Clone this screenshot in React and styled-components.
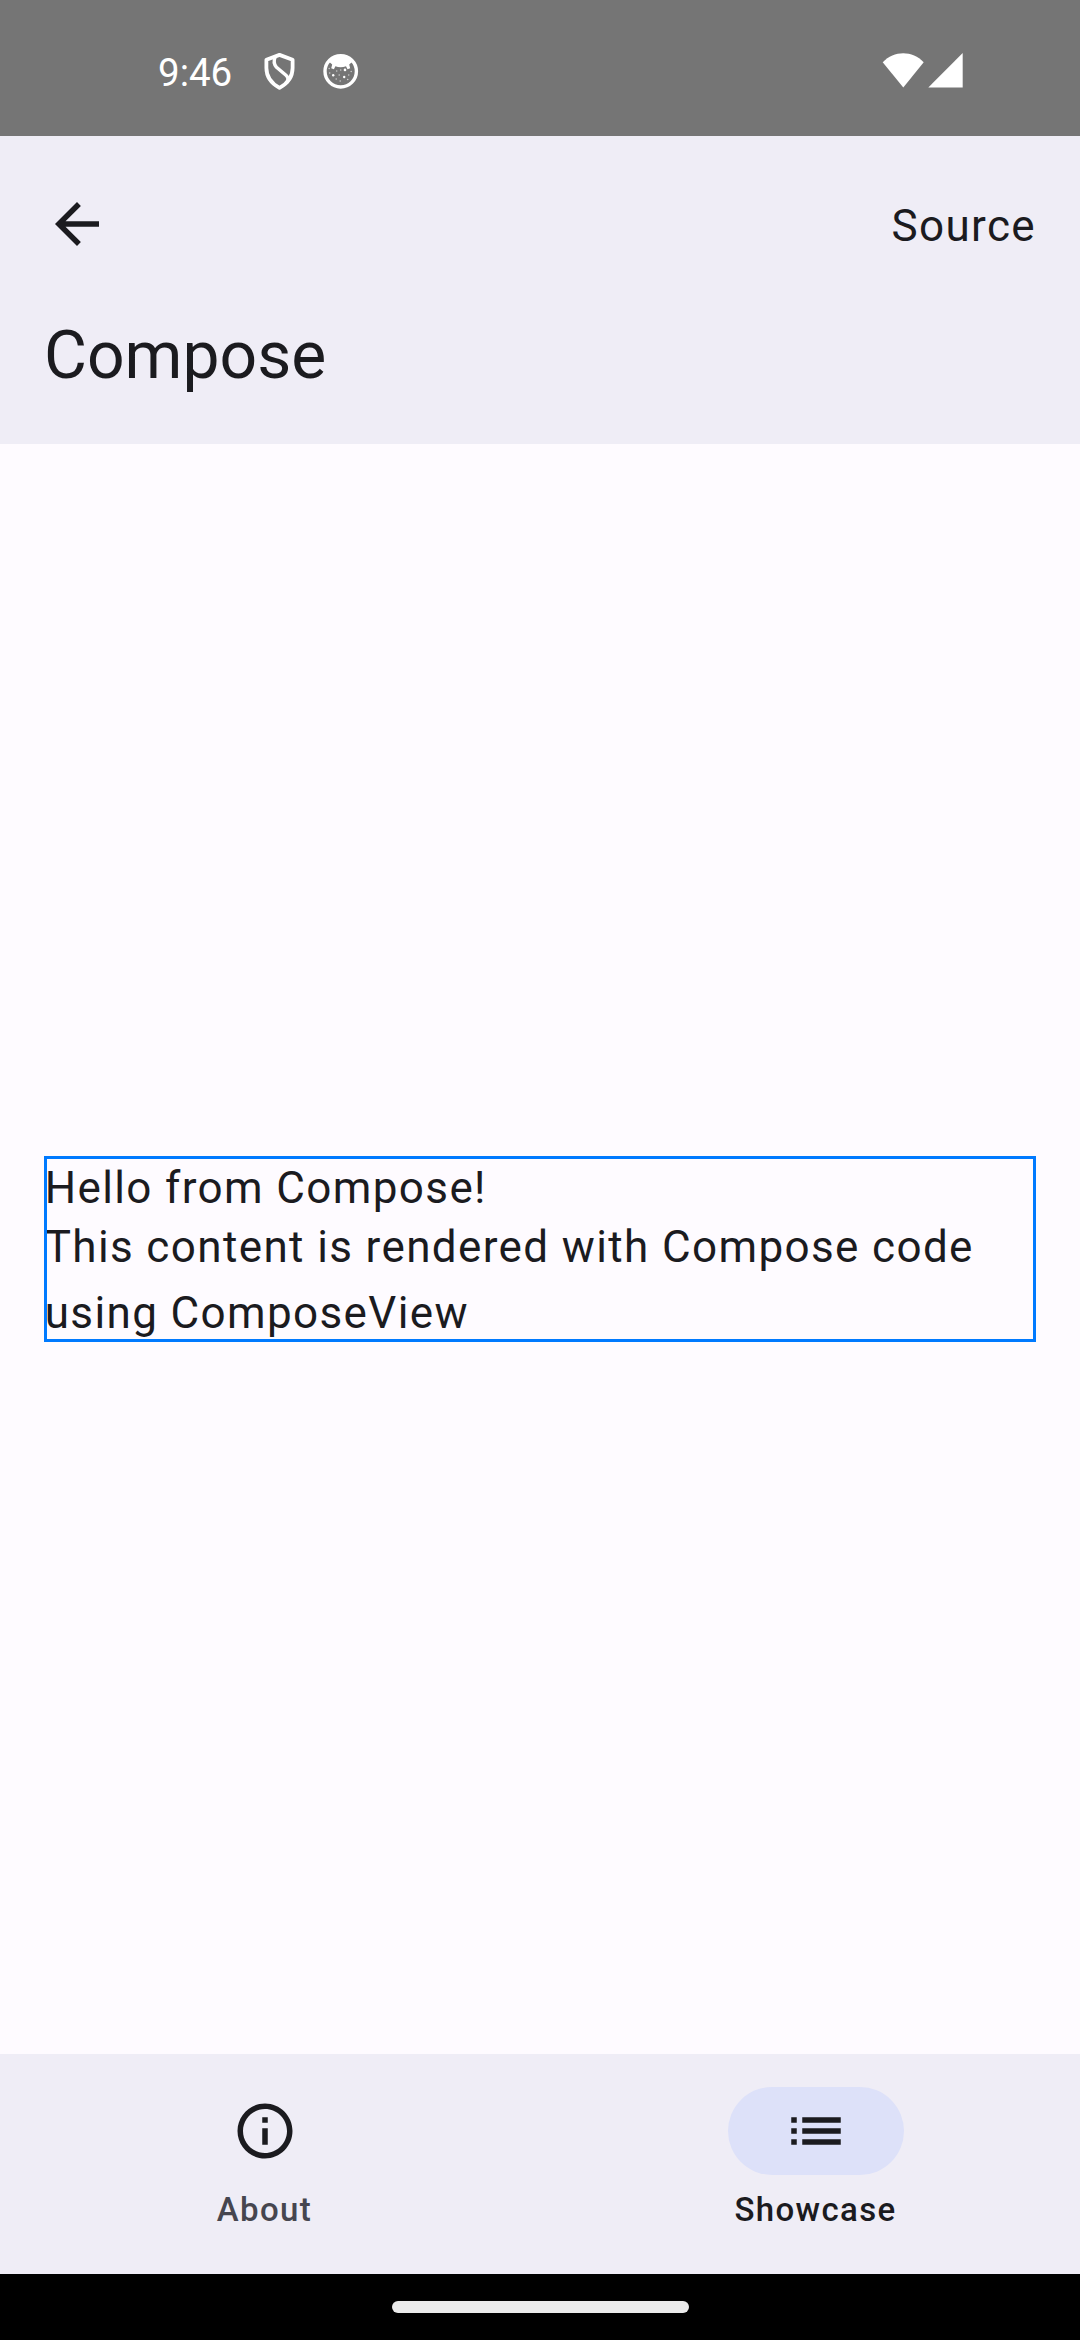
import React from 'react';
import styled, { createGlobalStyle } from 'styled-components';

const GlobalStyle = createGlobalStyle`
  *, *::before, *::after { box-sizing: border-box; }
  body { margin: 0; font-family: Roboto, "Noto Sans", sans-serif; color: #1b1b1f; }
  svg { display: block; flex: none; }
`;

const Screen = styled.div`
  display: flex;
  flex-direction: column;
  width: 1080px;
  height: 2340px;
  overflow: hidden;
  background: #fefbff;
`;

const StatusBar = styled.div`
  display: flex;
  justify-content: space-between;
  flex: none;
  height: 136px;
  padding: 52px 117px 0 158px;
  background: #757575;
  color: #fff;
`;

const StatusGroup = styled.div`
  display: flex;
  align-items: flex-start;
  height: 42px;
`;

const Clock = styled.span`
  width: 105px;
  font-size: 38.5px;
  line-height: 42px;
`;

const ShieldIcon = styled.svg`
  margin-right: 26px;
`;

const WifiIcon = styled.svg`
  margin-right: 4px;
`;

const Header = styled.header`
  flex: none;
  height: 308px;
  padding: 44px 44px 0;
  background: #efedf6;
`;

const HeaderRow = styled.div`
  display: flex;
  align-items: center;
  justify-content: space-between;
  height: 88px;
`;

const IconButton = styled.button`
  padding: 0;
  border: 0;
  background: none;
  color: inherit;
`;

const SourceLink = styled.span`
  padding-top: 3px;
  font-size: 44px;
  line-height: 66px;
  letter-spacing: 1.375px;
`;

const Title = styled.h1`
  margin: 44px 0 0;
  font-size: 66px;
  font-weight: 400;
  line-height: 88px;
`;

const Content = styled.main`
  display: flex;
  flex: 1;
  flex-direction: column;
  justify-content: center;
  padding: 0 44px;
`;

const ComposeBox = styled.section`
  height: 186px;
  padding: 6px 0 0 0.7px;
  outline: 3px solid #007aff;
  outline-offset: -3px;
`;

const Text = styled.p`
  margin: 0;
  font-size: 44px;
  line-height: ${({ $lineHeight }) => $lineHeight}px;
  letter-spacing: 1.375px;
`;

const BottomNav = styled.nav`
  display: flex;
  gap: 22px;
  flex: none;
  height: 220px;
  padding-top: 33px;
  background: #efedf6;
`;

const NavItem = styled.div`
  display: flex;
  flex: 1;
  flex-direction: column;
  align-items: center;
  color: ${({ $active }) => ($active ? '#1b1b1f' : '#46464f')};
`;

const Indicator = styled.span`
  display: flex;
  align-items: center;
  justify-content: center;
  width: 176px;
  height: 88px;
  border-radius: 44px;
  color: #1b1b1f;
  background: ${({ $active }) => ($active ? '#dde1f9' : 'transparent')};
`;

const NavLabel = styled.span`
  margin-top: 13px;
  font-size: 33px;
  font-weight: 500;
  line-height: 44px;
  letter-spacing: 1.375px;
`;

const GestureBar = styled.div`
  display: flex;
  justify-content: center;
  flex: none;
  height: 66px;
  padding-top: 27px;
  background: #000;
`;

const GestureHandle = styled.span`
  width: 297px;
  height: 12px;
  border-radius: 6px;
  background: #ebebeb;
`;

const icons = {
  back: 'M20 11H7.83l5.59-5.59L12 4l-8 8 8 8 1.41-1.41L7.83 13H20v-2z',
  info: 'M11 7h2v2h-2zm0 4h2v6h-2zm1-9C6.48 2 2 6.48 2 12s4.48 10 10 10 10-4.48 10-10S17.52 2 12 2zm0 18c-4.41 0-8-3.59-8-8s3.59-8 8-8 8 3.59 8 8-3.59 8-8 8z',
  list: 'M3 13h2v-2H3v2zm0 4h2v-2H3v2zm0-8h2V7H3v2zm4 4h14v-2H7v2zm0 4h14v-2H7v2zM7 7v2h14V7H7z',
};

function Icon({ name }) {
  return (
    <svg width="66" height="66" viewBox="0 0 24 24" fill="currentColor" aria-hidden="true">
      <path d={icons[name]} />
    </svg>
  );
}

function Shield() {
  return (
    <ShieldIcon width="33" height="38" viewBox="0 0 33 38" fill="none" stroke="#fff" strokeWidth="3.8" strokeLinejoin="round">
      <path d="M16.500 2.900 29.600 7.800V16C29.600 25 24.500 31.500 16.500 35.800 8.500 31.500 3.400 25 3.400 16V7.800Z" />
      <path d="M12.300 4.500C10.800 8 10.500 12 13.500 15.300L23 23.300C26 26 25.500 28.500 23.500 31" strokeWidth="3.4" />
    </ShieldIcon>
  );
}

function Face() {
  return (
    <svg width="37" height="38" viewBox="-.7 0 37 38" fill="#fff">
      <circle cx="18" cy="19.300" r="15.700" fill="none" stroke="#fff" strokeWidth="3.400" />
      <path d="M5.500 9C12 1 24 1 30.500 9L26.500 12.500 27.500 16.300 24.800 17.300 23.300 14.300C20 15.600 16 15.600 12.700 14.300L11.200 17.300 8.500 16.300 9.500 12.500Z" />
      <circle cx="22.300" cy="17.900" r="1.300" />
      <circle cx="10.500" cy="23.300" r="1.200" />
      <circle cx="21.500" cy="25" r="1.200" />
      <g opacity="0.6">
        <circle cx="6.500" cy="16.500" r=".8" /><circle cx="14" cy="19" r=".8" />
        <circle cx="18" cy="18" r=".8" /><circle cx="7" cy="21" r=".8" />
        <circle cx="28.500" cy="19.500" r=".8" /><circle cx="16.500" cy="23" r=".8" />
        <circle cx="26" cy="23" r=".8" /><circle cx="13.500" cy="27" r=".8" />
        <circle cx="17.500" cy="29" r=".8" /><circle cx="25" cy="27.500" r=".8" />
      </g>
    </svg>
  );
}

export default function App() {
  return (
    <Screen>
      <GlobalStyle />
      <StatusBar>
        <StatusGroup>
          <Clock>9:46</Clock>
          <Shield />
          <Face />
        </StatusGroup>
        <StatusGroup>
          <WifiIcon width="42" height="36" viewBox="0 0 42 36" fill="#fff">
            <path d="M.7 10.300C12-1.800 30.500-1.800 41.700 10.300L21.300 35.500Z" />
          </WifiIcon>
          <svg width="35" height="36" viewBox="0 0 35 36" fill="#fff">
            <path d="M34.700 1V35.600H.3Z" />
          </svg>
        </StatusGroup>
      </StatusBar>
      <Header>
        <HeaderRow>
          <IconButton aria-label="Back"><Icon name="back" /></IconButton>
          <SourceLink>Source</SourceLink>
        </HeaderRow>
        <Title>Compose</Title>
      </Header>
      <Content>
        <ComposeBox>
          <Text $lineHeight={52}>Hello from Compose!</Text>
          <Text $lineHeight={66}>This content is rendered with Compose code using ComposeView</Text>
        </ComposeBox>
      </Content>
      <BottomNav>
        <NavItem>
          <Indicator><Icon name="info" /></Indicator>
          <NavLabel>About</NavLabel>
        </NavItem>
        <NavItem $active>
          <Indicator $active><Icon name="list" /></Indicator>
          <NavLabel>Showcase</NavLabel>
        </NavItem>
      </BottomNav>
      <GestureBar><GestureHandle /></GestureBar>
    </Screen>
  );
}
